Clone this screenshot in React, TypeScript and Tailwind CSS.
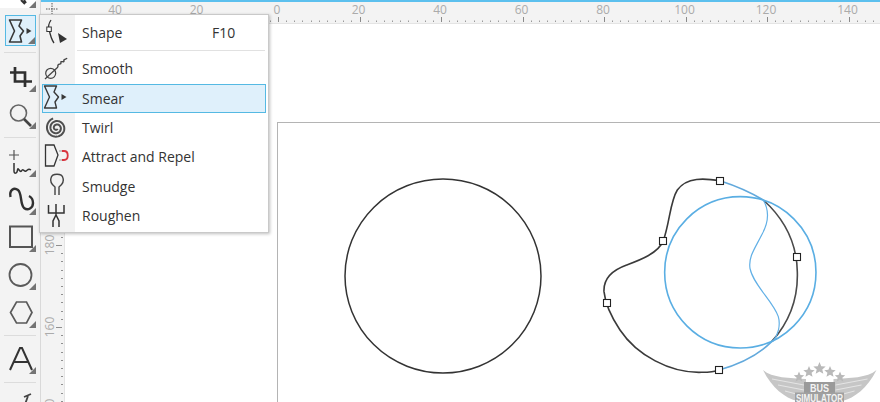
import React from "react";

const dark = "#383838";

function Corner() {
  return <span className="absolute right-0 bottom-[1px] w-0 h-0 border-l-[7px] border-l-transparent border-b-[7px] border-b-[#747474]" />;
}

function SmearGlyph({ color = dark, w = 1.4 }: { color?: string; w?: number }) {
  return (
    <>
      <path d="M6 5 H18 L15.5 11 L20 16 L16.5 21 L18 27 H6 L11 16 Z" fill="none" stroke={color} strokeWidth={w} strokeLinejoin="round" />
      <path d="M23 13 L28 16 L23 19 Z" fill={color} />
    </>
  );
}

function Tool({ children, y, mt }: { children: React.ReactNode; y: number; mt: number }) {
  return (
    <div className="relative w-[31px] h-[31px] ml-[5px] shrink-0" style={{ marginTop: mt }}>
      <svg width="31" height="31" viewBox={`5 ${y} 31 31`} className="block overflow-visible">{children}</svg>
      <Corner />
    </div>
  );
}

function Rule({ mt }: { mt: number }) {
  return <div className="h-px mx-[4px] bg-[#dcdcdc] shrink-0" style={{ marginTop: mt }} />;
}

function Toolbar() {
  return (
    <div className="w-[41px] h-full bg-[#f3f3f3] border-r border-[#d9d9d9] flex flex-col shrink-0 overflow-hidden">
      <div className="relative h-[8px] w-[36px] bg-white shrink-0">
        <svg width="36" height="8" className="absolute left-0 top-0">
          <path d="M21 0 L25 4 M24 0 L26 3" stroke="#333" strokeWidth="2" fill="none" />
          <path d="M36 1 V8 H29 Z" fill="#747474" />
        </svg>
      </div>
      <div className="relative mt-[7px] ml-[5px] w-[31px] h-[31px] bg-[#dff0fb] border border-[#55b9e3] shrink-0">
        <svg width="29" height="29" viewBox="6 16 29 29" className="block">
          <g transform="translate(3.5 15)"><SmearGlyph w={1.6} /></g>
        </svg>
        <Corner />
      </div>
      <Rule mt={6} />
      <Tool y={62} mt={9}>
        <path d="M15 67 V81.5 H32 M10 72.5 H25 V87" stroke="#2f2f2f" strokeWidth="2.7" fill="none" />
      </Tool>
      <Tool y={99} mt={6}>
        <circle cx="18.5" cy="113" r="8" stroke="#666" strokeWidth="1.6" fill="none" />
        <path d="M24 119 L31 126" stroke="#444" strokeWidth="2.6" />
      </Tool>
      <Rule mt={7} />
      <Tool y={147} mt={9}>
        <path d="M14 150 V160 M9 155 H19" stroke="#555" strokeWidth="1.2" fill="none" />
        <path d="M14 163 V171 C14 174 17 174 17.5 170 C18 166 19.5 173 21.5 171 C23 168 24 172 26 171 C28 170 28 168 31 170" stroke="#333" strokeWidth="1.5" fill="none" />
      </Tool>
      <Tool y={185} mt={7}>
        <path d="M10.5 197 C9 190 14 187 18 190 C22 193 20 204 24 208 C28 211 33 208 33 203 C33 199 31 197 29 196" stroke="#303030" strokeWidth="2.4" fill="none" />
      </Tool>
      <Tool y={222} mt={6}>
        <rect x="10" y="226.5" width="22" height="20.5" fill="none" stroke="#555" strokeWidth="2" />
      </Tool>
      <Tool y={260} mt={7}>
        <circle cx="20.5" cy="275" r="11" fill="none" stroke="#5a5a5a" strokeWidth="1.8" />
      </Tool>
      <Tool y={298} mt={7}>
        <path d="M16.5 302 H26.5 L32 312.5 L26.5 323 H16.5 L10.5 312.5 Z" fill="none" stroke="#5a5a5a" strokeWidth="1.7" />
      </Tool>
      <Rule mt={6} />
      <Tool y={344} mt={8}>
        <path d="M10 370 L20 348 H22 L32 370 M13.5 362 H28.5" fill="none" stroke="#333" strokeWidth="2" />
      </Tool>
      <Rule mt={7} />
      <div className="relative w-[31px] ml-[5px] h-[20px] shrink-0">
        <svg width="31" height="20" viewBox="5 383 31 20" className="block">
          <path d="M24 397 L31 394 M28 396 L25.5 403" stroke="#444" strokeWidth="1.8" fill="none" />
        </svg>
      </div>
    </div>
  );
}

function HRuler() {
  const x0 = 278;
  const u = 4.075;
  const ticks: number[] = [];
  for (let i = -26; i <= 150; i += 2) ticks.push(i);
  return (
    <div className="h-[22px] bg-[#f3f3f3] border-b border-[#e4e4e4] shrink-0">
      <svg width="839" height="22" viewBox="41 2 839 22" className="block">
        {ticks.map((t) => {
          const x = x0 + t * u;
          const major = t % 20 === 0;
          return <rect key={t} x={Math.round(x)} y={major ? 17 : 20.5} width="1" height={major ? 5 : 1.5} fill={major ? "#8a8a8a" : "#9a9a9a"} />;
        })}
        {[40, 20].map((n) => (
          <text key={"m" + n} x={x0 - n * u} y="14" textAnchor="middle" fontSize="12" fill="#ababab" fontFamily="'Open Sans', sans-serif">{n}</text>
        ))}
        {[0, 20, 40, 60, 80, 100, 120, 140].map((n) => (
          <text key={n} x={x0 - 1 + n * u} y="14" textAnchor="middle" fontSize="12" fill="#ababab" fontFamily="'Open Sans', sans-serif">{n}</text>
        ))}
      </svg>
    </div>
  );
}

function VRuler() {
  const ticks: number[] = [];
  for (let y = 327 - 82 * 3; y < 402; y += 8.2) ticks.push(y);
  return (
    <div className="w-[24px] h-full bg-[#f3f3f3] border-r border-[#e4e4e4] shrink-0">
      <svg width="24" height="378" viewBox="41 24 24 378" className="block">
        {ticks.map((y, i) => {
          const major = i % 10 === 0;
          return <rect key={i} x={major ? 56 : 61} y={Math.round(y)} width={major ? 6 : 2} height="1" fill="#8f8f8f" />;
        })}
        {[[180, 245], [160, 327], [140, 409]].map(([n, y]) => (
          <text key={n} transform={`translate(54 ${y}) rotate(-90)`} textAnchor="middle" fontSize="12" fill="#ababab" fontFamily="'Open Sans', sans-serif">{n}</text>
        ))}
      </svg>
    </div>
  );
}

const Handle = ({ x, y }: { x: number; y: number }) => (
  <rect x={Math.round(x) - 3.5} y={Math.round(y) - 3.5} width="7" height="7" fill="#fff" stroke="#222" strokeWidth="1.1" />
);

function Star({ x, y, r }: { x: number; y: number; r: number }) {
  const pts: string[] = [];
  for (let i = 0; i < 10; i++) {
    const a = -Math.PI / 2 + (i * Math.PI) / 5;
    const d = i % 2 === 0 ? r : r * 0.45;
    pts.push(`${x + d * Math.cos(a)},${y + d * Math.sin(a)}`);
  }
  return <polygon points={pts.join(" ")} fill="#b9b9b9" />;
}

function Logo() {
  const wing = "M763 370 C772 378 790 378 806 379 L806 396 L797 401 C785 398 772 388 763 370 Z";
  return (
    <g>
      <path d={wing} fill="#c6c6c6" />
      <path d={wing} fill="#c6c6c6" transform="translate(1639.5 0) scale(-1 1)" />
      <path d="M772 379 L804 385 M778 385 L804 390 M785 391 L800 395" stroke="#ececec" strokeWidth="0.8" />
      <path d="M867.5 379 L835.5 385 M861.5 385 L835.5 390 M854.5 391 L839.5 395" stroke="#ececec" strokeWidth="0.8" />
      <Star x={799} y={377} r={5.5} />
      <Star x={809} y={372} r={6} />
      <Star x={819.5} y={368.5} r={6.5} />
      <Star x={830} y={372} r={6} />
      <Star x={840} y={377} r={5.5} />
      <rect x="804" y="382" width="31" height="11" fill="#9a9a9a" />
      <rect x="795" y="392.5" width="49" height="9.5" fill="#a0a0a0" />
      <text x="819.5" y="391.5" textAnchor="middle" fontSize="10" fontWeight="700" fill="#f4f4f4" fontFamily="'Liberation Sans', sans-serif" textLength="19" lengthAdjust="spacingAndGlyphs">BUS</text>
      <text x="819.5" y="401.5" textAnchor="middle" fontSize="10" fontWeight="700" fill="#f4f4f4" fontFamily="'Liberation Sans', sans-serif" textLength="47" lengthAdjust="spacingAndGlyphs">SIMULATOR</text>
    </g>
  );
}

function Drawing() {
  return (
    <svg width="815" height="378" viewBox="65 24 815 378" className="absolute left-0 top-0">
      <ellipse cx="443" cy="276" rx="98" ry="97" fill="none" stroke="#333" strokeWidth="1.5" />
      <g transform="translate(590 165) scale(0.3333)" fill="none" strokeWidth="4.8">
        <path d="M390 47 C345 40 290 35 262 75 C240 110 240 170 220 227 C205 265 150 285 110 300 C60 318 40 345 42 380 C45 410 60 450 90 495 C140 570 240 625 335 622 C355 622 375 620 387 615" stroke="#3a3a3a" />
        <path d="M545 530 C590 480 625 410 622 320 C620 220 570 150 520 105" stroke="#4a4a4a" />
        <path d="M390 47 C430 60 480 80 520 105" stroke="#62a9dc" />
        <path d="M387 615 C440 600 500 575 545 530" stroke="#62a9dc" />
        <circle cx="451" cy="322" r="227" stroke="#5aaee3" />
        <path d="M520 105 C540 140 535 175 515 210 C495 250 475 275 480 310 C490 360 550 410 565 455 C572 480 565 510 548 530" stroke="#62b0e6" strokeWidth="3.6" />
      </g>
      <Handle x={720} y={181} />
      <Handle x={663} y={240.5} />
      <Handle x={796.5} y={256.5} />
      <Handle x={606.5} y={303} />
      <Handle x={719} y={370} />
      <Logo />
    </svg>
  );
}

function spiral() {
  const cx = 14.5;
  const cy = 14;
  let d = "";
  for (let i = 0; i <= 120; i++) {
    const t = i / 120;
    const a = t * Math.PI * 2 * 2.6 + 0.6;
    const r = 1.2 + t * 9;
    d += `${i === 0 ? "M" : "L"}${(cx + r * Math.cos(a)).toFixed(2)} ${(cy + r * Math.sin(a)).toFixed(2)} `;
  }
  return d;
}

function Row({ icon, label, shortcut, active }: { icon: React.ReactNode; label: string; shortcut?: string; active?: boolean }) {
  return (
    <div className={"relative flex items-center h-[29.33px] mx-[2px] border " + (active ? "bg-[#dff0fb] border-[#55b9e3]" : "border-transparent")}>
      <svg width="32" height="28" viewBox="0 0 32 28" className="shrink-0 -ml-[1px] overflow-visible">{icon}</svg>
      <span className="ml-[8px] text-[14px] text-[#333]">{label}</span>
      {shortcut && <span className="absolute left-[169px] text-[14px] text-[#333]">{shortcut}</span>}
    </div>
  );
}

function Menu() {
  return (
    <div className="absolute left-[39px] top-[14px] w-[230px] h-[219px] bg-white border border-[#c9c9c9] shadow-[1px_1px_3px_rgba(0,0,0,0.25)] flex flex-col font-['Open_Sans',sans-serif]">
      <div className="absolute left-0 top-0 bottom-0 w-[35px] bg-[#f2f2f2]" />
      <div className="relative pt-[3px] flex flex-col">
        <Row label="Shape" shortcut="F10" icon={
          <>
            <path d="M9 1 C7 4 6 7 7 10 C8 15 9 20 12 24" stroke="#333" strokeWidth="1.3" fill="none" />
            <rect x="4.8" y="8" width="4.5" height="4.5" fill="#fff" stroke="#333" />
            <path d="M16 14 L25 20 L18 24 Z" fill="#333" />
          </>
        } />
        <div className="h-px bg-[#e1e1e1] ml-[37px] mr-[3px] mt-[3px] mb-[3px]" />
        <Row label="Smooth" icon={
          <>
            <circle cx="8.7" cy="18.3" r="5" fill="none" stroke="#444" strokeWidth="1.2" />
            <path d="M3 24 L16 12" stroke="#444" strokeWidth="1.2" />
            <path d="M16 12 C15 8 19 10 19 8 C18 5 22 8 22 6 C21 4 24 5 25 3" stroke="#444" strokeWidth="1.4" fill="none" />
          </>
        } />
        <Row active label="Smear" icon={
          <g transform="translate(-3.5 -3)"><SmearGlyph /></g>
        } />
        <Row label="Twirl" icon={<path d={spiral()} fill="none" stroke="#4f4f4f" strokeWidth="2" />} />
        <Row label="Attract and Repel" icon={
          <>
            <path d="M3.5 2 H12 L16 12 L12 23 H3.5 Z" fill="none" stroke="#333" strokeWidth="1.3" />
            <path d="M20 8 H22 C27 8 27 17 22 17 H20" fill="none" stroke="#d8353f" strokeWidth="1.8" />
            <path d="M17 8 H20 M17 17 H20" stroke="#b9b9b9" strokeWidth="1.6" />
          </>
        } />
        <Row label="Smudge" icon={
          <path d="M13 23 V15 C9 12 8 9 9 6 C10 1 20 1 21 6 C22 9 21 12 17 15 V23" fill="none" stroke="#444" strokeWidth="1.4" />
        } />
        <Row label="Roughen" icon={
          <path d="M6.5 3 V11 H22 V3 M14 2 V13 M11 25 V19 L14 13 L17 19 V25" fill="none" stroke="#333" strokeWidth="1.5" />
        } />
      </div>
    </div>
  );
}

export default function App() {
  return (
    <div className="relative w-[880px] h-[402px] overflow-hidden flex bg-white">
      <Toolbar />
      <div className="flex-1 flex flex-col min-w-0">
        <div className="h-[2px] bg-[#5cc0ee] shrink-0" />
        <HRuler />
        <div className="flex-1 flex min-h-0">
          <VRuler />
          <div className="relative flex-1 bg-white pl-[212px] pt-[98px]">
            <div className="w-full h-[400px] border-l border-t border-[#b4b4b4]" />
            <Drawing />
          </div>
        </div>
      </div>
      <svg width="14" height="12" className="absolute left-[45px] top-[3px]">
        <path d="M1 6 H13" stroke="#555" strokeWidth="1" strokeDasharray="1.5 1" />
        <path d="M7 0 V12" stroke="#555" strokeWidth="1" strokeDasharray="1.5 1" />
      </svg>
      <Menu />
    </div>
  );
}
